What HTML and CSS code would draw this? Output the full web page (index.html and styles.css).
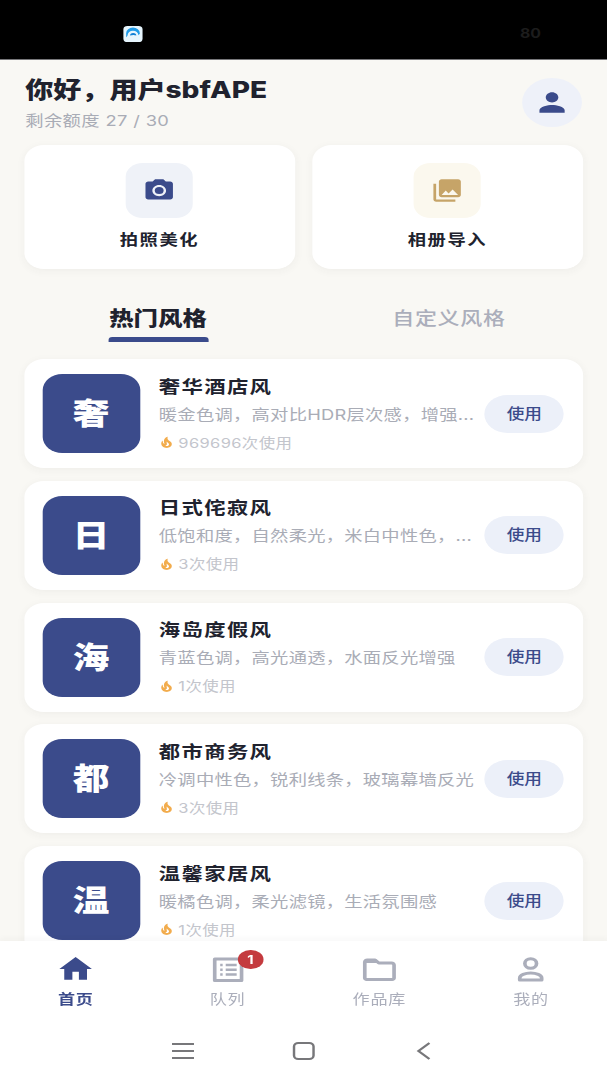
FILE: index.html
```html
<!DOCTYPE html>
<html lang="zh-CN">
<head>
<meta charset="utf-8">
<title>首页</title>
<link rel="stylesheet" href="styles.css">
</head>
<body>
<div class="app">
  <div class="status">
    <svg class="status-app" viewBox="0 0 20 20"><rect width="20" height="20" rx="4.500" fill="#e6f5fd"/><path d="M3 14V9a7 7 0 0 1 14 0v1a3 3 0 0 0-1.500 1.500 5.500 5.500 0 0 0-11 0C4 13 3.500 13.500 3 14z" fill="#1f9be8"/><path d="M7 12a3.200 3.200 0 0 1 6.400 0c-1.500-1-4.500-1-6.400 0z" fill="#0f7fd6"/></svg>
    <span class="status-num">80</span>
  </div>
  <main class="main">
    <header class="header">
      <div>
        <h1 class="title">你好，用户sbfAPE</h1>
        <p class="quota">剩余额度 27 / 30</p>
      </div>
      <div class="avatar"><svg class="avatar-icon" viewBox="0 0 24 24"><path d="M12 12c2.210 0 4-1.790 4-4s-1.790-4-4-4-4 1.790-4 4 1.790 4 4 4zm0 2c-2.670 0-8 1.340-8 4v2h16v-2c0-2.660-5.330-4-8-4z"/></svg></div>
    </header>
    <section class="actions">
      <div class="action">
        <div class="action-icon blue"><svg viewBox="0 0 24 24"><circle cx="12" cy="12" r="3.200"/><path d="M9 2L7.170 4H4c-1.100 0-2 .9-2 2v12c0 1.100.9 2 2 2h16c1.100 0 2-.9 2-2V6c0-1.100-.9-2-2-2h-3.170L15 2H9zm3 15c-2.760 0-5-2.240-5-5s2.240-5 5-5 5 2.240 5 5-2.240 5-5 5z"/></svg></div>
        <div class="action-label">拍照美化</div>
      </div>
      <div class="action">
        <div class="action-icon gold"><svg viewBox="0 0 24 24"><path d="M22 16V4c0-1.100-.9-2-2-2H8c-1.100 0-2 .9-2 2v12c0 1.100.9 2 2 2h12c1.100 0 2-.9 2-2zm-11-4l2.030 2.710L16 11l4 5H8l3-4zM2 6v14c0 1.100.9 2 2 2h14v-2H4V6H2z"/></svg></div>
        <div class="action-label">相册导入</div>
      </div>
    </section>
    <nav class="tabs">
      <div class="tab active">热门风格</div>
      <div class="tab">自定义风格</div>
    </nav>
    <section class="list">
      <article class="card">
        <div class="thumb">奢</div>
        <div class="info">
          <div class="name">奢华酒店风</div>
          <div class="desc">暖金色调，高对比HDR层次感，增强...</div>
          <div class="uses"><svg class="flame" viewBox="0 0 24 24"><path d="M19.480 12.350c-1.570-4.080-7.160-4.300-5.810-10.230.1-.44-.37-.78-.75-.55C9.290 3.710 6.680 8 8.870 13.620c.18.46-.36.89-.75.59-1.810-1.370-2-3.340-1.840-4.750.06-.52-.62-.77-.91-.34C4.690 10.160 4 11.840 4 14.370c.38 5.600 5.110 7.320 6.810 7.540 2.430.31 5.060-.14 6.950-1.870 2.080-1.930 2.840-5.010 1.720-7.690zm-9.280 5.030c1.440-.35 2.180-1.390 2.380-2.310.33-1.430-.96-2.830-.09-5.090.33 1.870 3.270 3.040 3.270 5.080.08 2.530-2.660 4.700-5.560 2.320z"/></svg>969696次使用</div>
        </div>
        <button class="use">使用</button>
      </article>
      <article class="card">
        <div class="thumb">日</div>
        <div class="info">
          <div class="name">日式侘寂风</div>
          <div class="desc">低饱和度，自然柔光，米白中性色，...</div>
          <div class="uses"><svg class="flame" viewBox="0 0 24 24"><path d="M19.480 12.350c-1.570-4.080-7.160-4.300-5.810-10.230.1-.44-.37-.78-.75-.55C9.290 3.710 6.680 8 8.870 13.620c.18.46-.36.89-.75.59-1.810-1.370-2-3.340-1.840-4.750.06-.52-.62-.77-.91-.34C4.690 10.160 4 11.840 4 14.370c.38 5.600 5.110 7.320 6.810 7.540 2.430.31 5.060-.14 6.950-1.870 2.080-1.930 2.840-5.010 1.720-7.690zm-9.280 5.030c1.440-.35 2.180-1.390 2.380-2.310.33-1.430-.96-2.830-.09-5.090.33 1.870 3.270 3.040 3.270 5.080.08 2.530-2.660 4.700-5.560 2.320z"/></svg>3次使用</div>
        </div>
        <button class="use">使用</button>
      </article>
      <article class="card">
        <div class="thumb">海</div>
        <div class="info">
          <div class="name">海岛度假风</div>
          <div class="desc">青蓝色调，高光通透，水面反光增强</div>
          <div class="uses"><svg class="flame" viewBox="0 0 24 24"><path d="M19.480 12.350c-1.570-4.080-7.160-4.300-5.810-10.230.1-.44-.37-.78-.75-.55C9.290 3.710 6.680 8 8.870 13.620c.18.46-.36.89-.75.59-1.810-1.370-2-3.340-1.840-4.750.06-.52-.62-.77-.91-.34C4.690 10.160 4 11.840 4 14.370c.38 5.600 5.110 7.320 6.810 7.540 2.430.31 5.060-.14 6.950-1.870 2.080-1.930 2.840-5.010 1.720-7.690zm-9.280 5.030c1.440-.35 2.180-1.390 2.380-2.310.33-1.430-.96-2.830-.09-5.090.33 1.870 3.270 3.040 3.270 5.080.08 2.530-2.660 4.700-5.560 2.320z"/></svg>1次使用</div>
        </div>
        <button class="use">使用</button>
      </article>
      <article class="card">
        <div class="thumb">都</div>
        <div class="info">
          <div class="name">都市商务风</div>
          <div class="desc">冷调中性色，锐利线条，玻璃幕墙反光</div>
          <div class="uses"><svg class="flame" viewBox="0 0 24 24"><path d="M19.480 12.350c-1.570-4.080-7.160-4.300-5.810-10.230.1-.44-.37-.78-.75-.55C9.290 3.710 6.680 8 8.870 13.620c.18.46-.36.89-.75.59-1.810-1.370-2-3.340-1.840-4.750.06-.52-.62-.77-.91-.34C4.690 10.160 4 11.840 4 14.370c.38 5.600 5.110 7.320 6.810 7.540 2.430.31 5.060-.14 6.950-1.870 2.080-1.930 2.840-5.010 1.720-7.690zm-9.280 5.030c1.440-.35 2.180-1.390 2.380-2.310.33-1.430-.96-2.830-.09-5.090.33 1.870 3.270 3.040 3.270 5.080.08 2.530-2.660 4.700-5.560 2.320z"/></svg>3次使用</div>
        </div>
        <button class="use">使用</button>
      </article>
      <article class="card">
        <div class="thumb">温</div>
        <div class="info">
          <div class="name">温馨家居风</div>
          <div class="desc">暖橘色调，柔光滤镜，生活氛围感</div>
          <div class="uses"><svg class="flame" viewBox="0 0 24 24"><path d="M19.480 12.350c-1.570-4.080-7.160-4.300-5.810-10.230.1-.44-.37-.78-.75-.55C9.290 3.710 6.680 8 8.870 13.620c.18.46-.36.89-.75.59-1.810-1.370-2-3.340-1.840-4.750.06-.52-.62-.77-.91-.34C4.690 10.160 4 11.840 4 14.370c.38 5.600 5.110 7.320 6.810 7.540 2.430.31 5.060-.14 6.950-1.870 2.080-1.930 2.840-5.010 1.720-7.690zm-9.280 5.030c1.440-.35 2.180-1.390 2.380-2.310.33-1.430-.96-2.830-.09-5.090.33 1.870 3.270 3.040 3.270 5.080.08 2.530-2.660 4.700-5.560 2.320z"/></svg>1次使用</div>
        </div>
        <button class="use">使用</button>
      </article>
    </section>
  </main>
  <footer class="bottom">
    <nav class="navbar">
      <div class="nav-item current">
        <svg class="nav-icon" viewBox="0 0 24 24"><path class="fill" d="M10 20v-6h4v6h5v-8h3L12 3 2 12h3v8z"/></svg>
        <span>首页</span>
      </div>
      <div class="nav-item">
        <div class="nav-icon-wrap">
          <svg class="nav-icon" viewBox="0 0 32 32"><rect class="line thick" x="5" y="6" width="22" height="21.500"/><path class="line wide" d="M9.500 12h2M14 12h9M9.500 16.700h2M14 16.700h9M9.500 21.500h2M14 21.500h9"/></svg>
          <b class="badge">1</b>
        </div>
        <span>队列</span>
      </div>
      <div class="nav-item">
        <svg class="nav-icon" viewBox="0 0 32 32"><path class="line thick" d="M4 9a2 2 0 0 1 2-2h6.500l3 3H26a2 2 0 0 1 2 2v13a1.500 1.500 0 0 1-1.500 1.500h-21A1.500 1.500 0 0 1 4 25z"/><path class="fill-grey" d="M4 7h9l3 3H4z"/></svg>
        <span>作品库</span>
      </div>
      <div class="nav-item">
        <svg class="nav-icon" viewBox="0 0 32 32"><circle class="line thick" cx="16" cy="10.500" r="4.800"/><path class="line thick" d="M7 27v-2c0-3 4.500-5 9-5s9 2 9 5v2z"/></svg>
        <span>我的</span>
      </div>
    </nav>
    <div class="sysbar">
      <svg class="sys-icon" viewBox="0 0 18 18"><path class="sys-line" d="M0 2h18M0 9h18M0 16h18"/></svg>
      <svg class="sys-icon" viewBox="0 0 18 18"><rect class="sys-line" x="1" y="1" width="16" height="16" rx="3.500"/></svg>
      <svg class="sys-icon" viewBox="0 0 18 18"><path class="sys-line" d="M13 1L4 9l9 8"/></svg>
    </div>
  </footer>
</div>
</body>
</html>
```

FILE: styles.css
```css
* { box-sizing: border-box; margin: 0; padding: 0; }
html, body { height: 1080px; overflow: hidden; background: #f9f8f4; }
body { font-family: Inter, "Noto Sans CJK SC", "Noto Sans", sans-serif; }

/* The reference is stretched horizontally by about 1.22 and slightly soft; the whole app is laid out in flow and scaled once. */
.app {
  width: 497.500px;
  height: 1080px;
  display: flex;
  flex-direction: column;
  transform: scaleX(1.22);
  transform-origin: 0 0;
  filter: blur(.35px);
}

.status {
  height: 60px;
  flex: none;
  background: #000;
  border-bottom: 1px solid #77777a;
  display: flex;
  align-items: flex-start;
  justify-content: space-between;
  padding: 26px 54px 0 101px;
}
.status-app { width: 16px; height: 16px; }
.status-num { font-size: 13px; line-height: 15px; font-weight: 700; color: #1c1c1c; }

.main {
  flex: 1;
  min-height: 0;
  overflow: hidden;
  padding: 18px 19.700px 0;
  background: #f9f8f4;
}

.header { display: flex; justify-content: space-between; align-items: flex-start; height: 49px; }
.title { font-size: 23px; line-height: 26px; font-weight: 800; color: #20222e; margin-top: -1px; margin-left: 1px; }
.quota { font-size: 15px; line-height: 20px; color: #a9acb6; margin-top: 8px; margin-left: 1px; letter-spacing: .3px; }
.avatar {
  width: 49px; height: 49px; border-radius: 50%;
  background: #eef1f9;
  display: flex; align-items: center; justify-content: center;
  margin-right: 1px;
}
.avatar-icon { width: 31px; height: 31px; fill: #3b4b8b; }

.actions { display: flex; gap: 14px; margin-top: 18px; }
.action {
  flex: 1; height: 124px; background: #fff; border-radius: 16px;
  box-shadow: 0 2px 8px rgba(60, 60, 50, .05);
  display: flex; flex-direction: column; align-items: center; padding-top: 18px;
}
.action-icon { width: 55px; height: 55px; border-radius: 14px; display: flex; align-items: center; justify-content: center; }
.action-icon svg { width: 27px; height: 27px; }
.blue { background: #eff2f8; fill: #3b4b8b; }
.gold { background: #fbf8ee; fill: #c6a468; }
.action-label { font-size: 15px; line-height: 22px; font-weight: 700; color: #20222e; letter-spacing: 1.300px; margin-top: 11px; }

.tabs { display: flex; justify-content: center; gap: 152px; margin-top: 26px; height: 47px; padding-left: 6.500px; }
.tab { font-size: 18px; line-height: 48px; font-weight: 500; color: #abaebb; letter-spacing: .6px; position: relative; }
.tab.active { font-size: 20px; font-weight: 800; color: #20222e; letter-spacing: 0; }
.tab.active::after {
  content: ""; position: absolute; left: -1px; right: -1px; bottom: 0; height: 5px;
  background: #3b4b8b; border-radius: 3px 3px 0 0;
}

.list { display: flex; flex-direction: column; gap: 12.800px; margin-top: 17px; }
.card {
  height: 109px; flex: none; background: #fff; border-radius: 16px;
  box-shadow: 0 2px 8px rgba(60, 60, 50, .05);
  display: flex; align-items: center; padding: 0 15.500px 0 15px;
}
.thumb {
  width: 80px; height: 79px; flex: none; border-radius: 16px;
  background: #3b4b8b; color: #fff;
  font-size: 30px; font-weight: 900; line-height: 79px; text-align: center;
}
.info { flex: 1; min-width: 0; margin: 0 5px 0 15.500px; }
.name { font-size: 17.500px; line-height: 24px; font-weight: 700; color: #20222e; letter-spacing: 1.100px; }
.desc { font-size: 15px; line-height: 20px; color: #a9acb6; letter-spacing: .2px; margin-top: 6px; white-space: nowrap; }
.uses { display: flex; align-items: center; gap: 3px; font-size: 13.500px; line-height: 20px; color: #c3c5cc; margin-top: 8px; letter-spacing: .3px; }
.flame { width: 13px; height: 13px; fill: #f2ac4d; flex: none; }
.use {
  width: 65px; height: 38px; flex: none; border: 0; border-radius: 19px;
  background: #ecf0f9; color: #3b4b8b;
  font: 500 14.500px/38px Inter, "Noto Sans CJK SC", sans-serif;
}

.bottom { height: 139px; flex: none; background: #fff; position: relative; box-shadow: 0 -2px 6px rgba(60, 60, 50, .04); }
.navbar { display: flex; height: 77px; padding-top: 12px; }
.nav-item { flex: 1; display: flex; flex-direction: column; align-items: center; font-size: 14px; line-height: 18px; color: #abaebb; letter-spacing: .6px; }
.nav-item.current { color: #3b4b8b; font-weight: 700; }
.nav-icon { width: 32px; height: 32px; display: block; margin-bottom: 5px; }
.nav-icon-wrap { position: relative; }
.fill { fill: #3b4b8b; }
.fill-grey { fill: #abaebb; }
.line { fill: none; stroke: #abaebb; stroke-width: 2; }
.wide { stroke-width: 2.500; }
.thick { stroke-width: 3; stroke-linejoin: round; }
.badge {
  position: absolute; top: -3px; left: 24.500px;
  width: 20.500px; height: 19px; border-radius: 50%;
  background: #c43a3e; color: #fff;
  font-size: 12px; line-height: 19px; font-weight: 700; text-align: center; letter-spacing: 0;
}
.sysbar { display: flex; justify-content: center; gap: 81px; padding: 24px 0 0 0; margin-left: 1px; }
.sys-icon { width: 18px; height: 18px; overflow: visible; }
.sys-line { fill: none; stroke: #77777a; stroke-width: 2; }
```
